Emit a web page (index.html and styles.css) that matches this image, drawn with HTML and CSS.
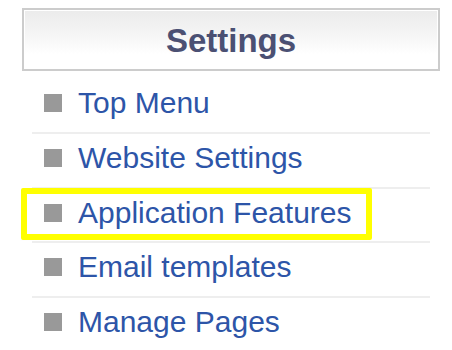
FILE: index.html
```html
<!DOCTYPE html>
<html>
<head>
<meta charset="utf-8">
<link rel="stylesheet" href="styles.css">
</head>
<body>
<div class="panel">
  <div class="panel-head">Settings</div>
  <ul class="menu">
    <li class="item"><span class="bullet"></span><a href="#">Top Menu</a></li>
    <li class="item"><span class="bullet"></span><a href="#">Website Settings</a></li>
    <li class="item"><span class="highlight"></span><span class="bullet"></span><a href="#">Application Features</a></li>
    <li class="item"><span class="bullet"></span><a href="#">Email templates</a></li>
    <li class="item"><span class="bullet"></span><a href="#">Manage Pages</a></li>
  </ul>
</div>
</body>
</html>
```
FILE: styles.css
```css
html, body {
  margin: 0;
  padding: 0;
  background: #ffffff;
}
body {
  font-family: "Liberation Sans", Arial, sans-serif;
  padding: 8px 0 0 22px;
}
.panel {
  width: 418px;
}
.panel-head {
  box-sizing: border-box;
  height: 63px;
  border: 2px solid #cccccc;
  box-shadow: inset 0 0 0 1px #ffffff;
  background: linear-gradient(to bottom, #ebebeb 0%, #f6f6f6 45%, #ffffff 75%, #ffffff 100%);
  text-align: center;
  font-size: 33px;
  font-weight: bold;
  color: #4b5073;
  line-height: 59px;
  padding-top: 1px;
}
.menu {
  list-style: none;
  margin: 8.33px 10px 0 10px;
  padding: 0;
}
.item {
  position: relative;
  display: flex;
  align-items: center;
  gap: 16px;
  padding: 7px 0 11.67px 12px;
  border-bottom: 2px solid #eeeeee;
  font-size: 30px;
  line-height: 34px;
}
.item:last-child {
  border-bottom: none;
}
.bullet {
  width: 18px;
  height: 18px;
  background: #999999;
  flex: none;
}
.item a {
  color: #2d55a8;
  text-decoration: none;
  letter-spacing: 0;
}
.highlight {
  position: absolute;
  left: -11px;
  top: -1px;
  width: 351px;
  height: 52px;
  box-sizing: border-box;
  border: 5px solid #ffff00;
  border-radius: 2px;
  box-shadow: inset 0 0 0 1px #ffff00;
}
```
